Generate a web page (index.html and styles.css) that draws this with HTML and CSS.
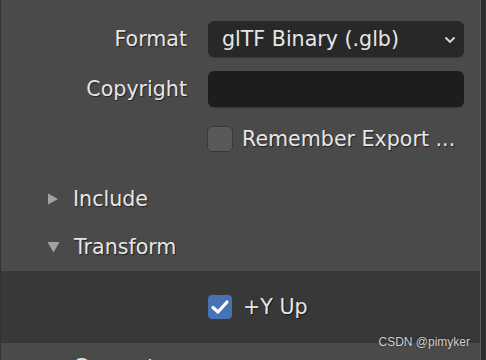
FILE: index.html
```html
<!DOCTYPE html>
<html lang="en">
<head>
    <meta charset="UTF-8">
    <title>glTF Export</title>
    <link rel="stylesheet" href="styles.css">
</head>
<body>
    <div class="window">
        <div class="panel">
            <!-- Opções principais -->
            <div class="prop-row">
                <span class="prop-label">Format</span>
                <div class="dropdown">
                    <span>glTF Binary (.glb)</span>
                    <svg class="chevron" width="12" height="8" viewBox="0 0 12 8">
                        <polyline points="1.5,1.5 6,6 10.5,1.5" fill="none" stroke="#dcdcdc" stroke-width="1.8"/>
                    </svg>
                </div>
            </div>

            <div class="prop-row">
                <span class="prop-label">Copyright</span>
                <div class="text-field"></div>
            </div>

            <div class="check-row remember">
                <span class="checkbox"></span>
                <span class="check-text">Remember Export ...</span>
            </div>

            <!-- Seções -->
            <div class="section-head">
                <svg class="arrow" width="12" height="12" viewBox="0 0 12 12">
                    <polygon points="1,0.5 11,6 1,11.5" fill="#a2a2a2"/>
                </svg>
                <span>Include</span>
            </div>

            <div class="section-head">
                <svg class="arrow" width="13" height="12" viewBox="0 0 13 12">
                    <polygon points="0.5,1 12.5,1 6.5,11.5" fill="#a2a2a2"/>
                </svg>
                <span>Transform</span>
            </div>

            <div class="section-body">
                <div class="check-row">
                    <span class="checkbox checked">
                        <svg width="24" height="24" viewBox="0 0 24 24">
                            <polyline points="5,12.5 10,17 19,7" fill="none" stroke="#ffffff" stroke-width="3.2" stroke-linecap="round" stroke-linejoin="round"/>
                        </svg>
                    </span>
                    <span class="check-text">+Y Up</span>
                </div>
            </div>

            <div class="section-head">
                <svg class="arrow" width="12" height="12" viewBox="0 0 12 12">
                    <polygon points="1,0.5 11,6 1,11.5" fill="#a2a2a2"/>
                </svg>
                <span>Geometry</span>
            </div>

            <div class="watermark">CSDN @pimyker</div>
        </div>
        <div class="scroll"></div>
    </div>
</body>
</html>
```

FILE: styles.css
```css
/* Painel estilo Blender */
body {
    margin: 0;
    background-color: #2b2b2b;
    font-family: "DejaVu Sans", sans-serif;
    font-size: 20.6px;
    color: #e6e6e6;
    overflow: hidden;
}

.window {
    display: flex;
    width: 486px;
    height: 360px;
    overflow: hidden;
}

.panel {
    position: relative;
    width: 481px;
    background-color: #4a4a4a;
    border-left: 1px solid #333333;
    padding-top: 21px;
    box-sizing: border-box;
}

.scroll {
    width: 5px;
    background-color: #2c2c2c;
    border-left: 1px solid #5c5c5c;
}

.prop-row {
    display: flex;
    align-items: center;
    height: 36px;
    margin-bottom: 14px;
}

.prop-label {
    width: 186px;
    text-align: right;
    margin-right: 21px;
    text-shadow: 1px 1px 1px rgba(0, 0, 0, 0.55);
}

.dropdown, .text-field {
    width: 256px;
    height: 36px;
    border-radius: 6px;
    box-shadow: 0px 1px 1px rgba(0, 0, 0, 0.25);
}

.dropdown {
    display: flex;
    align-items: center;
    justify-content: space-between;
    background-color: #282828;
    padding: 0 8px 0 14px;
    box-sizing: border-box;
}

.chevron {
    margin-top: 2px;
}

.text-field {
    background-color: #1d1d1d;
}

.check-row {
    display: flex;
    align-items: center;
    padding-left: 206px;
    height: 26px;
}

.remember {
    margin-top: 19px;
    margin-bottom: 23px;
}

.checkbox {
    display: flex;
    align-items: center;
    justify-content: center;
    width: 24px;
    height: 24px;
    border: 1px solid #383838;
    border-radius: 5px;
    background-color: #585858;
    margin-right: 9px;
}

.checkbox.checked {
    background-color: #4772b3;
    border-color: #3a3a3a;
    margin-right: 10px;
}

.check-text {
    text-shadow: 1px 1px 1px rgba(0, 0, 0, 0.55);
}

.section-head {
    display: flex;
    align-items: center;
    height: 48px;
    padding-left: 46px;
}

.section-head span {
    margin-left: 14px;
    text-shadow: 1px 1px 1px rgba(0, 0, 0, 0.55);
}

.section-head .arrow {
    flex-shrink: 0;
}

.section-body {
    background-color: #383838;
    height: 72px;
    padding-top: 23px;
    box-sizing: border-box;
}

.watermark {
    position: absolute;
    right: 10px;
    top: 335px;
    font-family: "Liberation Sans", Arial, sans-serif;
    font-size: 12px;
    color: #cfcfcf;
    text-shadow: 0px 0px 2px rgba(0, 0, 0, 0.5);
}
```
